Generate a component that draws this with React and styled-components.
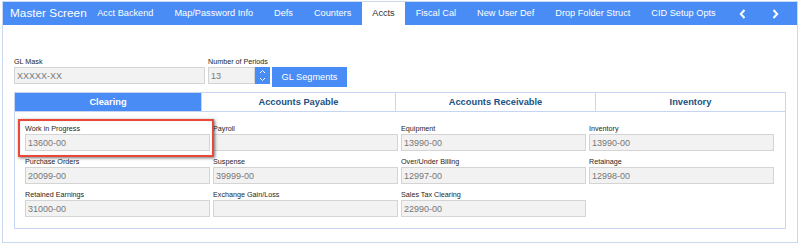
import React from 'react';
import styled, { createGlobalStyle } from 'styled-components';

const GlobalStyle = createGlobalStyle`
  html, body {
    margin: 0;
    padding: 0;
    background: #ffffff;
    font-family: "Liberation Sans", Arial, sans-serif;
  }
`;

const Panel = styled.div`
  position: relative;
  box-sizing: border-box;
  width: 796px;
  margin: 1px 0 0 2px;
  border: 1px solid #c9d9f2;
  padding-bottom: 13px;
`;

const Header = styled.div`
  display: flex;
  align-items: center;
  height: 23px;
  background: #4a8cf6;
  padding-left: 7px;
`;

const Title = styled.div`
  color: #ffffff;
  font-size: 11.8px;
  line-height: 23px;
  white-space: nowrap;
`;

const NavTab = styled.div`
  height: 23px;
  line-height: 23px;
  padding: 0 10.5px;
  font-size: 9.2px;
  white-space: nowrap;
  color: ${(p) => (p.$active ? '#333333' : '#ffffff')};
  background: ${(p) => (p.$active ? '#ffffff' : 'transparent')};
`;

const Arrow = styled.div`
  width: 33px;
  height: 23px;
  display: flex;
  align-items: center;
  justify-content: center;
`;

const Body = styled.div`
  padding: 32px 11px 0;
`;

const TopRow = styled.div`
  display: flex;
  align-items: flex-start;
`;

const Field = styled.div`
  display: flex;
  flex-direction: column;
  margin-right: ${(p) => p.$gap || 0}px;
`;

const Label = styled.div`
  font-size: 7.2px;
  line-height: 9px;
  height: 9px;
  margin-bottom: 1px;
  color: #1e1e1e;
  white-space: nowrap;
`;

const Input = styled.input`
  box-sizing: border-box;
  width: ${(p) => p.$w}px;
  height: 17px;
  margin: 0;
  padding: 0 0 0 2px;
  border: 1px solid #d4d4d4;
  background: #f2f2f2;
  color: #777777;
  font-family: "Liberation Sans", Arial, sans-serif;
  font-size: 9px;
  outline: none;
`;

const SpinRow = styled.div`
  display: flex;
`;

const Spinner = styled.div`
  width: 15px;
  height: 17px;
  background: #4a8cf6;
  display: flex;
  align-items: center;
  justify-content: center;
`;

const Button = styled.button`
  margin: 10px 0 0 2px;
  width: 75px;
  height: 20px;
  padding: 0;
  border: none;
  background: #4a8cf6;
  color: #ffffff;
  font-family: "Liberation Sans", Arial, sans-serif;
  font-size: 9.2px;
`;

const TabStrip = styled.div`
  display: flex;
  margin-top: 5px;
  height: 20px;
  box-sizing: border-box;
  border: 1px solid #c6d6f1;
`;

const SubTab = styled.div`
  flex: ${(p) => (p.$w ? `0 0 ${p.$w}px` : '1')};
  display: flex;
  align-items: center;
  justify-content: center;
  font-size: 9.3px;
  font-weight: bold;
  color: ${(p) => (p.$active ? '#ffffff' : '#1b5283')};
  background: ${(p) => (p.$active ? '#4a8cf6' : '#ffffff')};
  border-left: ${(p) => (p.$first ? 'none' : '1px solid #c6d6f1')};
`;

const Content = styled.div`
  border: 1px solid #c6d6f1;
  border-top: none;
  padding: 12px 10px 11px;
`;

const Grid = styled.div`
  display: grid;
  grid-template-columns: repeat(4, 185px);
  column-gap: 3px;
  row-gap: 6px;
`;

const Highlight = styled.div`
  position: absolute;
  left: 15px;
  top: 117px;
  width: 196px;
  height: 38px;
  box-sizing: border-box;
  border: 2.5px solid #e9483b;
  box-shadow: 1px 1px 3px rgba(0, 0, 0, 0.55), inset 0 0 1px rgba(0, 0, 0, 0.3);
  pointer-events: none;
`;

const Chevron = ({ dir }) => (
  <svg width="7" height="10" viewBox="0 0 7 10">
    <path
      d={dir === 'left' ? 'M5.5 1 L1.8 5 L5.5 9' : 'M1.5 1 L5.2 5 L1.5 9'}
      fill="none"
      stroke="#ffffff"
      strokeWidth="2"
    />
  </svg>
);

const SpinIcon = () => (
  <svg width="9" height="15" viewBox="0 0 9 15">
    <path d="M2 5 L4.5 2.5 L7 5" fill="none" stroke="#ffffff" strokeWidth="1" />
    <path d="M2 10 L4.5 12.5 L7 10" fill="none" stroke="#ffffff" strokeWidth="1" />
  </svg>
);

const navTabs = [
  'Acct Backend',
  'Map/Password Info',
  'Defs',
  'Counters',
  'Accts',
  'Fiscal Cal',
  'New User Def',
  'Drop Folder Struct',
  'CID Setup Opts',
];

const subTabs = [
  { label: 'Clearing', w: 186 },
  { label: 'Accounts Payable', w: 193 },
  { label: 'Accounts Receivable', w: 199 },
  { label: 'Inventory' },
];

const fields = [
  { label: 'Work in Progress', value: '13600-00' },
  { label: 'Payroll', value: '' },
  { label: 'Equipment', value: '13990-00' },
  { label: 'Inventory', value: '13990-00' },
  { label: 'Purchase Orders', value: '20099-00' },
  { label: 'Suspense', value: '39999-00' },
  { label: 'Over/Under Billing', value: '12997-00' },
  { label: 'Retainage', value: '12998-00' },
  { label: 'Retained Earnings', value: '31000-00' },
  { label: 'Exchange Gain/Loss', value: '' },
  { label: 'Sales Tax Clearing', value: '22990-00' },
];

const App = () => {
  return (
    <>
      <GlobalStyle />
      <Panel>
        <Header>
          <Title>Master Screen</Title>
          {navTabs.map((t) => (
            <NavTab key={t} $active={t === 'Accts'}>
              {t}
            </NavTab>
          ))}
          <Arrow>
            <Chevron dir="left" />
          </Arrow>
          <Arrow>
            <Chevron dir="right" />
          </Arrow>
        </Header>
        <Body>
          <TopRow>
            <Field $gap={3}>
              <Label>GL Mask</Label>
              <Input $w={191} readOnly value="XXXXX-XX" />
            </Field>
            <Field>
              <Label>Number of Periods</Label>
              <SpinRow>
                <Input $w={47} readOnly value="13" />
                <Spinner>
                  <SpinIcon />
                </Spinner>
              </SpinRow>
            </Field>
            <Button>GL Segments</Button>
          </TopRow>
          <TabStrip>
            {subTabs.map((t, i) => (
              <SubTab key={t.label} $w={t.w} $active={i === 0} $first={i === 0}>
                {t.label}
              </SubTab>
            ))}
          </TabStrip>
          <Content>
            <Grid>
              {fields.map((f) => (
                <Field key={f.label}>
                  <Label>{f.label}</Label>
                  <Input $w={185} readOnly value={f.value} />
                </Field>
              ))}
            </Grid>
          </Content>
        </Body>
        <Highlight />
      </Panel>
    </>
  );
};

export default App;
